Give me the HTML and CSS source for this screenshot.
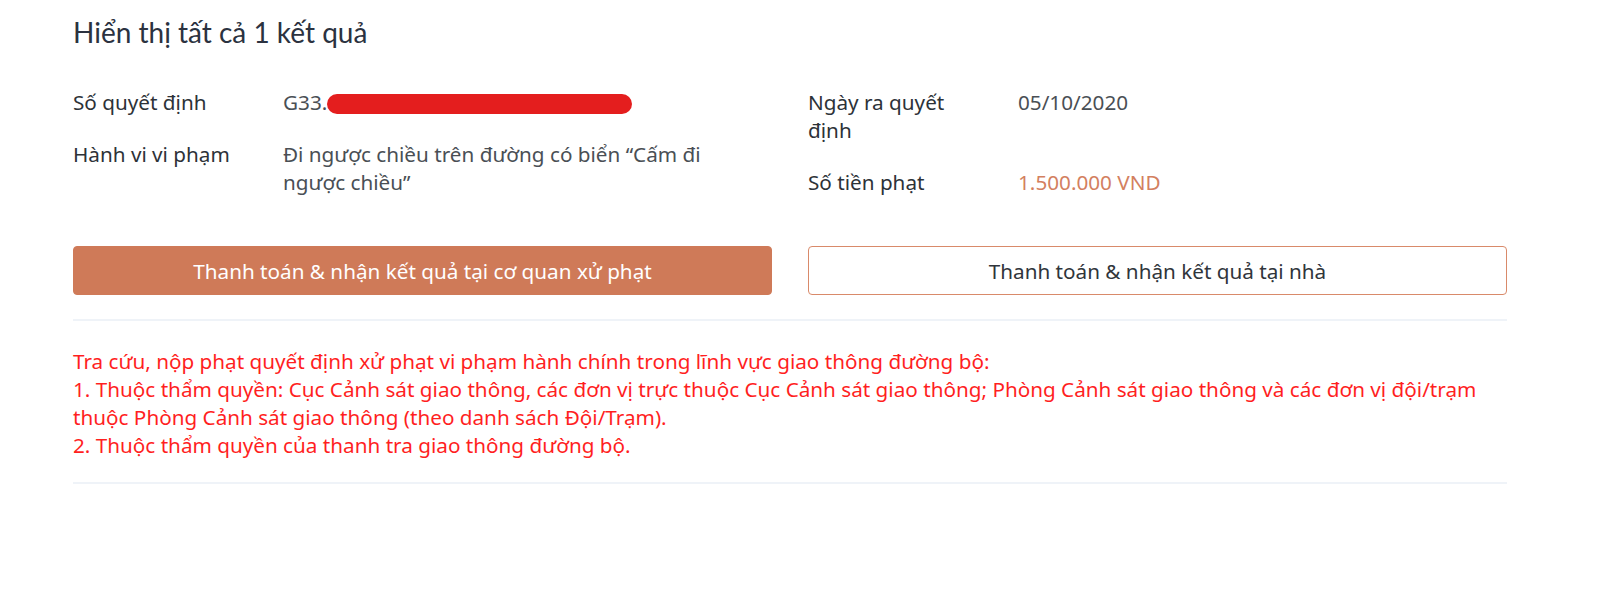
FILE: index.html
```html
<!DOCTYPE html>
<html lang="vi">
<head>
<meta charset="utf-8">
<title>Kết quả tra cứu</title>
<link rel="stylesheet" href="styles.css">
</head>
<body>
<main class="page">
  <h2 class="result-title">Hiển thị tất cả 1 kết quả</h2>

  <section class="details">
    <div class="info">
      <div class="info-row">
        <div class="info-label">Số quyết định</div>
        <div class="info-value">G33.<span class="redact"></span></div>
      </div>
      <div class="info-row">
        <div class="info-label">Hành vi vi phạm</div>
        <div class="info-value">Đi ngược chiều trên đường có biển “Cấm đi ngược chiều”</div>
      </div>
    </div>
    <div class="info">
      <div class="info-row">
        <div class="info-label">Ngày ra quyết định</div>
        <div class="info-value">05/10/2020</div>
      </div>
      <div class="info-row">
        <div class="info-label">Số tiền phạt</div>
        <div class="info-value amount">1.500.000 VND</div>
      </div>
    </div>
  </section>

  <section class="actions">
    <button class="btn btn-primary" type="button">Thanh toán &amp; nhận kết quả tại cơ quan xử phạt</button>
    <button class="btn btn-outline" type="button">Thanh toán &amp; nhận kết quả tại nhà</button>
  </section>

  <hr class="divider">

  <p class="notice">Tra cứu, nộp phạt quyết định xử phạt vi phạm hành chính trong lĩnh vực giao thông đường bộ:<br>1. Thuộc thẩm quyền: Cục Cảnh sát giao thông, các đơn vị trực thuộc Cục Cảnh sát giao thông; Phòng Cảnh sát giao thông và các đơn vị đội/trạm thuộc Phòng Cảnh sát giao thông (theo danh sách Đội/Trạm).<br>2. Thuộc thẩm quyền của thanh tra giao thông đường bộ.</p>

  <hr class="divider">
</main>
</body>
</html>
```

FILE: styles.css
```css
* {
  box-sizing: border-box;
}

html, body {
  margin: 0;
  padding: 0;
  background: #ffffff;
}

body {
  font-family: "Noto Sans", "Open Sans", sans-serif;
  font-size: 20.7px;
  line-height: 28px;
  color: #343a40;
}

.page {
  width: 1434px;
  margin-left: 73px;
  padding-top: 14px;
}

.result-title {
  margin: 0;
  font-family: Lato, "Noto Sans", sans-serif;
  font-weight: 400;
  font-size: 28px;
  line-height: 36px;
  color: #2b3240;
}

.details {
  display: grid;
  grid-template-columns: 1fr 1fr;
  column-gap: 36px;
  margin-top: 38px;
}

.info-row {
  display: grid;
  grid-template-columns: 210px 1fr;
  margin-bottom: 24px;
}

.info-label {
  padding-right: 50px;
  color: #2d3238;
}

.info-value {
  padding-right: 50px;
  color: #4a4f55;
}

.amount {
  color: #d3805f;
}

.redact {
  display: inline-block;
  width: 305px;
  height: 20px;
  border-radius: 10px;
  background: #e41e1e;
  vertical-align: -4px;
}

.actions {
  display: grid;
  grid-template-columns: 1fr 1fr;
  column-gap: 36px;
  margin-top: 26px;
}

.btn {
  height: 49px;
  border-radius: 4px;
  font-family: inherit;
  font-size: 20.7px;
  cursor: pointer;
}

.btn-primary {
  background: #cf7a58;
  border: 1px solid #cf7a58;
  color: #ffffff;
}

.btn-outline {
  background: #ffffff;
  border: 1px solid #d98a6a;
  color: #30353b;
}

.divider {
  margin: 0;
  border: 0;
  height: 2px;
  background: #eff3f8;
}

.actions + .divider {
  margin-top: 24px;
}

.notice {
  margin: 26px 0 23px;
  color: #ff1f1f;
}
```
